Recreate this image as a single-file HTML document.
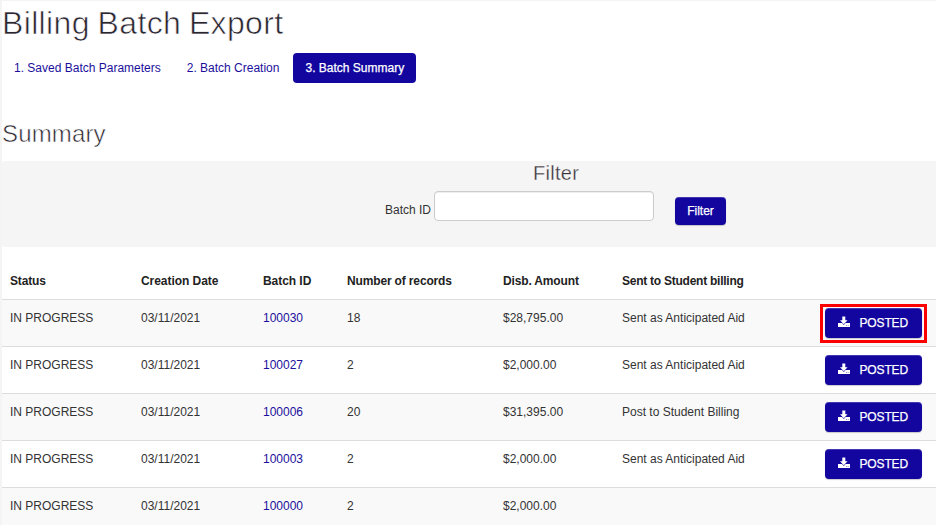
<!DOCTYPE html>
<html lang="en">
<head>
<meta charset="utf-8">
<title>Billing Batch Export</title>
<style>
*{box-sizing:border-box}
html,body{margin:0;padding:0;background:#fff}
body{width:936px;height:525px;overflow:hidden;position:relative;font-family:"Liberation Sans",Arial,sans-serif;font-size:12px;color:#333;line-height:20px}
.topline{position:absolute;left:0;top:0;width:936px;height:1px;background:#f4f4f4}
.leftline{z-index:5;position:absolute;left:0;top:0;width:2px;height:525px;background:#f4f4f4}
h1{position:absolute;left:2px;top:4px;margin:0;font-weight:normal;font-size:32px;line-height:38px;color:#2b2630;white-space:nowrap;letter-spacing:.35px;word-spacing:-1.5px;-webkit-text-stroke:.65px #fff}
.tabs{position:absolute;left:2px;top:53px;height:30px;white-space:nowrap}
.tab{display:inline-block;margin-right:2px;height:30px;line-height:30px;padding:0 12px;border-radius:4px;color:#1b0f9c;font-size:12px;vertical-align:top}
.tab.active{background:#12069f;color:#fff;-webkit-text-stroke:.25px #fff}
h2{position:absolute;left:2px;top:119px;margin:0;font-weight:normal;font-size:24px;line-height:30px;color:#2b2630;white-space:nowrap;letter-spacing:.15px;-webkit-text-stroke:.55px #fff}
.panel{position:absolute;left:2px;top:161px;width:934px;border-radius:3px 0 0 3px;height:86px;background:#f5f5f5}
.panel h3{position:absolute;left:-2px;top:0;width:1112px;margin:0;text-align:center;font-weight:normal;font-size:20px;line-height:24px;color:#38333a;letter-spacing:.3px;-webkit-text-stroke:.3px #f5f5f5}
.lbl{position:absolute;left:385px;top:200px;font-size:12px;color:#333}
.inp{position:absolute;left:434px;top:191px;width:220px;height:30px;background:#fff;border:1px solid #ccc;border-radius:4px;box-shadow:inset 0 1px 1px rgba(0,0,0,.075)}
.btn{-webkit-text-stroke:.25px #fff;display:inline-block;background:#12069f;color:#fff;border-radius:4px;font-size:12px;text-align:center;box-shadow:inset 0 1px 0 rgba(255,255,255,.2),0 1px 1px rgba(0,0,0,.2)}
.fbtn{position:absolute;left:675px;top:197px;width:51px;height:28px;line-height:28px}
table{position:absolute;left:0;top:262px;width:936px;border-collapse:collapse;table-layout:fixed}
th{height:37px;text-align:left;padding:2px 0 0 10px;letter-spacing:-.15px;font-weight:bold;color:#222;vertical-align:middle}
td{height:47px;padding:8px 0 0 10px;vertical-align:top;border-top:1px solid #ddd;color:#333}
th:nth-child(2),th:nth-child(3){letter-spacing:-.05px}
th:nth-child(6){letter-spacing:-.25px}
tr.odd td{background:#f9f9f9}
td a{color:#1b0f9c;text-decoration:none}
td.act{padding:8px 0 0 0}
.pbtn{width:97px;height:30px;line-height:30px;margin-left:12px;font-size:12px;position:relative;text-align:left;padding-left:34.5px;letter-spacing:-.15px}
.pbtn svg{position:absolute;left:13px;top:8px}
.hl{position:absolute;left:820px;top:304px;width:107px;height:39px;border:3px solid #fc0000;}
</style>
</head>
<body>
<div class="topline"></div><div class="leftline"></div>
<h1>Billing Batch Export</h1>
<div class="tabs"><span class="tab">1. Saved Batch Parameters</span><span class="tab">2. Batch Creation</span><span class="tab active">3. Batch Summary</span></div>
<h2>Summary</h2>
<div class="panel"><h3>Filter</h3></div>
<span class="lbl">Batch ID</span>
<div class="inp"></div>
<span class="btn fbtn">Filter</span>
<table>
<colgroup><col style="width:131px"><col style="width:122px"><col style="width:84px"><col style="width:156px"><col style="width:119px"><col style="width:201px"><col style="width:123px"></colgroup>
<thead><tr><th>Status</th><th>Creation Date</th><th>Batch ID</th><th>Number of records</th><th>Disb. Amount</th><th>Sent to Student billing</th><th></th></tr></thead>
<tbody>
<tr class="odd"><td>IN PROGRESS</td><td>03/11/2021</td><td><a>100030</a></td><td>18</td><td>$28,795.00</td><td>Sent as Anticipated Aid</td><td class="act"><span class="btn pbtn"><svg width="12" height="12" viewBox="0 0 12 12"><path fill="#fff" d="M4.3 .6h3v3.6h2.3L5.8 8.2 2 4.2h2.3zM0 7.1h4L5.8 9 7.6 7.1H12V11H0z"/><path fill="#12069f" fill-opacity=".8" d="M8 9h.7v.7H8zM9.8 9h.7v.7h-.7z"/></svg>POSTED</span></td></tr>
<tr><td>IN PROGRESS</td><td>03/11/2021</td><td><a>100027</a></td><td>2</td><td>$2,000.00</td><td>Sent as Anticipated Aid</td><td class="act"><span class="btn pbtn"><svg width="12" height="12" viewBox="0 0 12 12"><path fill="#fff" d="M4.3 .6h3v3.6h2.3L5.8 8.2 2 4.2h2.3zM0 7.1h4L5.8 9 7.6 7.1H12V11H0z"/><path fill="#12069f" fill-opacity=".8" d="M8 9h.7v.7H8zM9.8 9h.7v.7h-.7z"/></svg>POSTED</span></td></tr>
<tr class="odd"><td>IN PROGRESS</td><td>03/11/2021</td><td><a>100006</a></td><td>20</td><td>$31,395.00</td><td>Post to Student Billing</td><td class="act"><span class="btn pbtn"><svg width="12" height="12" viewBox="0 0 12 12"><path fill="#fff" d="M4.3 .6h3v3.6h2.3L5.8 8.2 2 4.2h2.3zM0 7.1h4L5.8 9 7.6 7.1H12V11H0z"/><path fill="#12069f" fill-opacity=".8" d="M8 9h.7v.7H8zM9.8 9h.7v.7h-.7z"/></svg>POSTED</span></td></tr>
<tr><td>IN PROGRESS</td><td>03/11/2021</td><td><a>100003</a></td><td>2</td><td>$2,000.00</td><td>Sent as Anticipated Aid</td><td class="act"><span class="btn pbtn"><svg width="12" height="12" viewBox="0 0 12 12"><path fill="#fff" d="M4.3 .6h3v3.6h2.3L5.8 8.2 2 4.2h2.3zM0 7.1h4L5.8 9 7.6 7.1H12V11H0z"/><path fill="#12069f" fill-opacity=".8" d="M8 9h.7v.7H8zM9.8 9h.7v.7h-.7z"/></svg>POSTED</span></td></tr>
<tr class="odd"><td>IN PROGRESS</td><td>03/11/2021</td><td><a>100000</a></td><td>2</td><td>$2,000.00</td><td></td><td class="act"></td></tr>
</tbody>
</table>
<div class="hl"></div>
</body>
</html>
